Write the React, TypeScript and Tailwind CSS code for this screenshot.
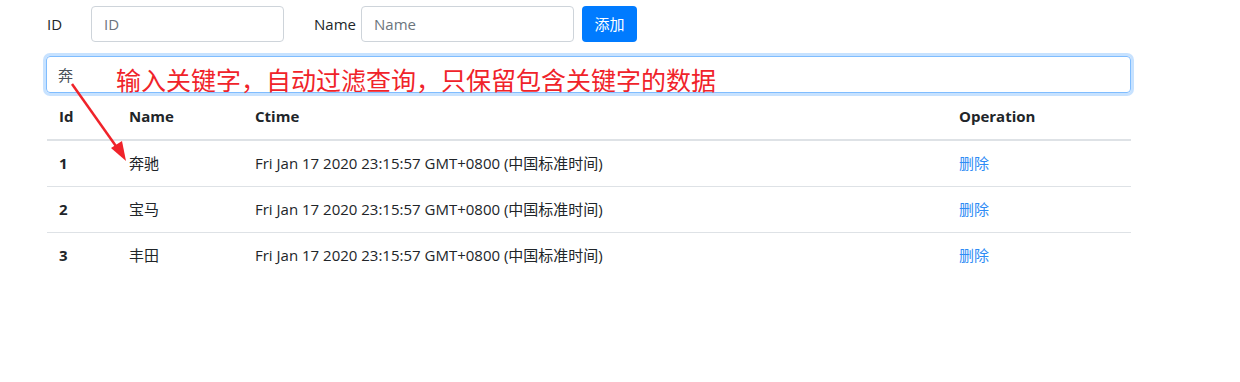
import React, { useState } from 'react';

interface Car {
  id: number;
  name: string;
  ctime: string;
}

const cars: Car[] = [
  { id: 1, name: '奔驰', ctime: 'Fri Jan 17 2020 23:15:57 GMT+0800 (中国标准时间)' },
  { id: 2, name: '宝马', ctime: 'Fri Jan 17 2020 23:15:57 GMT+0800 (中国标准时间)' },
  { id: 3, name: '丰田', ctime: 'Fri Jan 17 2020 23:15:57 GMT+0800 (中国标准时间)' },
];

const font = { fontFamily: '"Open Sans", "Noto Sans CJK SC", sans-serif' };

export default function App() {
  const [keyword, setKeyword] = useState('奔');

  return (
    <div className="relative w-[1240px] h-[382px] bg-white text-[#212529] text-[15px]" style={font}>
      <div className="pl-[46px] pt-[6px] w-[1131px]">
        {/* add form */}
        <div className="flex items-center h-[36px]">
          <label className="w-[45px] pl-px">ID</label>
          <input
            placeholder="ID"
            className="w-[193px] h-[36px] border border-[#ced4da] rounded-[4px] px-[12px] outline-none placeholder:text-[#6c757d]"
          />
          <label className="ml-[30px] w-[47px]">Name</label>
          <input
            placeholder="Name"
            className="w-[213px] h-[36px] border border-[#ced4da] rounded-[4px] px-[12px] outline-none placeholder:text-[#6c757d]"
          />
          <button className="ml-[8px] w-[55px] h-[36px] bg-[#007bff] text-white rounded-[4px]">添加</button>
        </div>

        {/* search */}
        <input
          value={keyword}
          onChange={(e) => setKeyword(e.target.value)}
          className="mt-[14px] w-[1085px] h-[37px] border border-[#80bdff] rounded-[4px] px-[11px] text-[#495057] outline-none shadow-[0_0_0_3px_rgba(0,123,255,0.22)]"
        />

        {/* list */}
        <table className="mt-px ml-px w-[1084px] border-collapse text-left">
          <thead>
            <tr className="border-b-2 border-[#dee2e6] h-[46px]">
              <th className="w-[70px] px-[12px] font-bold">Id</th>
              <th className="w-[126px] px-[12px] font-bold">Name</th>
              <th className="w-[704px] px-[12px] font-bold">Ctime</th>
              <th className="px-[12px] font-bold">Operation</th>
            </tr>
          </thead>
          <tbody>
            {cars.map((c) => (
              <tr key={c.id} className="border-t border-[#dee2e6] h-[46px]">
                <td className="px-[12px] font-bold">{c.id}</td>
                <td className="px-[12px]">{c.name}</td>
                <td className="px-[12px]">{c.ctime}</td>
                <td className="px-[12px]">
                  <a href="#" className="text-[#2f8cf5]">删除</a>
                </td>
              </tr>
            ))}
          </tbody>
        </table>
      </div>

      {/* annotation */}
      <div
        className="absolute left-[116px] top-[63px] text-[25px] leading-[32px] text-[#f0232a]"
        style={{ fontFamily: '"Noto Sans CJK SC", sans-serif' }}
      >
        输入关键字，自动过滤查询，只保留包含关键字的数据
      </div>
      <svg className="absolute left-0 top-0 pointer-events-none" width="200" height="200">
        <line x1="72" y1="84" x2="118" y2="149" stroke="#f0232a" strokeWidth="2.5" />
        <polygon points="126,161 111,148 122,141" fill="#f0232a" />
      </svg>
    </div>
  );
}
